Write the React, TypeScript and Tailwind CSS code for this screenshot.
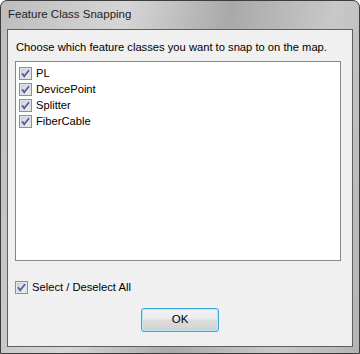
const items = ["PL", "DevicePoint", "Splitter", "FiberCable"]

const Check = () => (
  <svg width="13" height="13" viewBox="0 0 13 13" className="shrink-0">
    <defs>
      <linearGradient id="cbg" x1="0" y1="0" x2="1" y2="1">
        <stop offset="0" stopColor="#cfd3d9" />
        <stop offset="1" stopColor="#f4f5f7" />
      </linearGradient>
    </defs>
    <rect x="0.5" y="0.5" width="12" height="12" fill="#f4f4f4" stroke="#8e8f8f" />
    <rect x="2" y="2" width="9" height="9" fill="url(#cbg)" stroke="#b7bcc4" strokeWidth="0.5" />
    <path d="M3 6.2 L5.2 9.2 L10 3.2" fill="none" stroke="#4a5f97" strokeWidth="1.8" />
  </svg>
)

export default function App() {
  return (
    <div
      className="w-[360px] h-[354px] flex flex-col border border-[#3d3d3d] rounded-t-[7px] bg-[linear-gradient(100deg,#bdbdbd_0%,#d6d6d6_30%,#a9a9a9_55%,#c8c8c8_80%,#b4b4b4_100%)] text-[11.2px] text-black"
      style={{ fontFamily: '"Segoe UI", "Liberation Sans", Arial, sans-serif' }}
    >
      <div className="h-[28px] pl-[7px] flex items-center text-[#1e1e1e] text-[11.5px]">Feature Class Snapping</div>
      <div className="flex-1 mx-[6px] mb-[6px] border border-[#5f5f5f] bg-[#f0f0f0] flex flex-col">
        <p className="pl-[8px] pt-[10px] h-[31px] leading-[15px]">
          Choose which feature classes you want to snap to on the map.
        </p>
        <div className="ml-[7px] mr-[11px] h-[200px] border border-[#828790] bg-white pt-[3px] pl-[3px] flex flex-col">
          {items.map((it) => (
            <div key={it} className="h-[16px] flex items-center gap-[4px]">
              <Check />
              <span className="leading-[15px]">{it}</span>
            </div>
          ))}
        </div>
        <div className="ml-[7px] mt-[19px] flex items-center gap-[4px] h-[15px]">
          <Check />
          <span>Select / Deselect All</span>
        </div>
        <div className="flex justify-center mt-[13px]">
          <button className="w-[78px] h-[24px] rounded-[3px] border border-[#3ca6d9] bg-[linear-gradient(#f3f3f3_0%,#ebebeb_45%,#dddddd_50%,#d1d1d1_100%)] shadow-[inset_0_0_0_1px_#b9e9fb] text-[11.5px]">
            OK
          </button>
        </div>
      </div>
    </div>
  )
}
